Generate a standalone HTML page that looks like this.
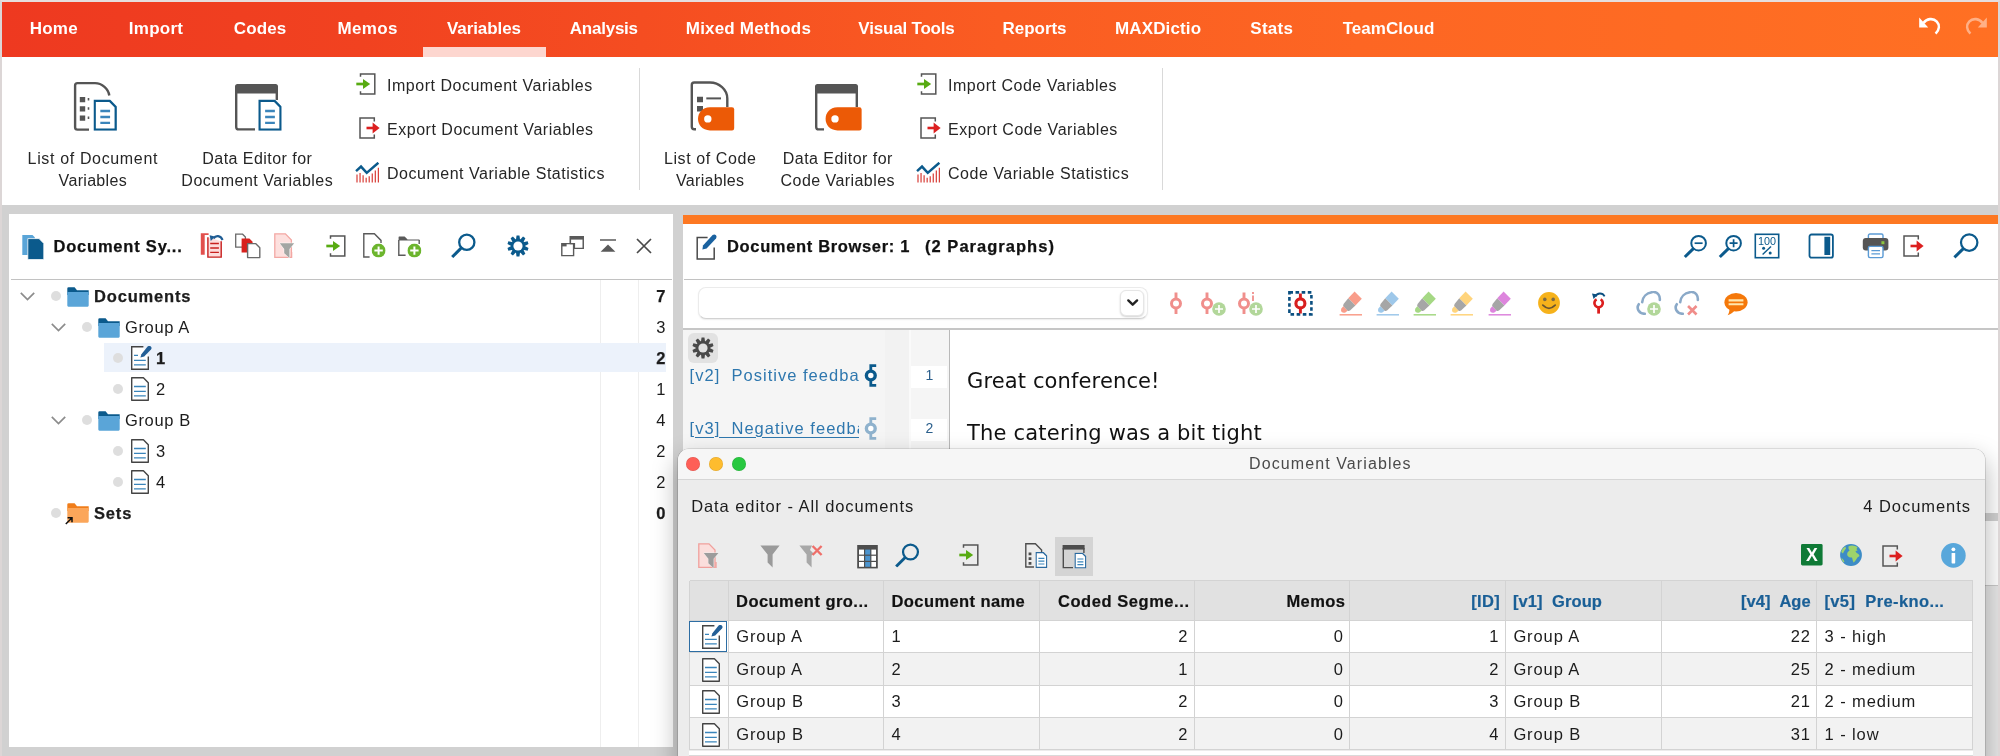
<!DOCTYPE html>
<html lang="en">
<head>
<meta charset="utf-8">
<title>Document Variables</title>
<style>
*{box-sizing:border-box;margin:0;padding:0}
html,body{width:2000px;height:756px;overflow:hidden}
body{position:relative;background:#d1d1d1;font-family:"Liberation Sans",sans-serif;color:#1a1a1a}
.a{position:absolute}
.t{position:absolute;white-space:pre;line-height:1}
svg{position:absolute;overflow:visible}
#root{position:absolute;left:0;top:0;width:2000px;height:756px;will-change:transform}
/* top ribbon */
#frame{left:0;top:0;width:2000px;height:756px;border:2px solid #dcd6d6;border-top-color:#e6dede;border-bottom:none;pointer-events:none;z-index:50}
#tabs{left:2px;top:2px;width:1996px;height:55px;background:linear-gradient(90deg,#ee3920 0%,#f14220 18%,#f54d21 32%,#fa5c22 50%,#fd6623 68%,#ff7023 100%)}
.tab{color:#fff;font-weight:bold;font-size:17px;top:20px}
#tabsel{left:423px;top:47px;width:123px;height:10px;background:#fdd6cf}
#ribbon{left:2px;top:57px;width:1996px;height:148px;background:#fff}
.rl{letter-spacing:.5px;font-size:16px;color:#262626;text-align:center;line-height:22px;white-space:nowrap;position:absolute}
.rs{font-size:16px;color:#262626;letter-spacing:.52px}
.vsep{width:1px;background:#d9d9d9;top:68px;height:122px}
/* left panel */
#lp{left:9px;top:214px;width:664px;height:533px;background:#fff}
.hb{-webkit-text-stroke:.25px #111;font-weight:bold;font-size:16.5px;color:#111}
.tr{font-size:16.5px;color:#1c1c1c}
.tr[style*="bold"],.num[style*="bold"]{-webkit-text-stroke:.25px}
.num{font-size:16.5px;color:#1c1c1c;text-align:right;width:40px}
.dot{width:10px;height:10px;border-radius:50%;background:#dedede}
.th{font-size:16.5px;font-weight:bold;-webkit-text-stroke:.2px}
.td{font-size:16.5px;color:#1c1c1c;letter-spacing:.9px}
/* right panel */
#rp{left:683px;top:214.6px;width:1315px;height:542px;background:#fff}
</style>
</head>
<body>
<div id="root">
<div class="a" id="tabs"></div>
<div class="a" id="tabsel"></div>
<div class="t tab" style="left:29.8px;letter-spacing:0.19px">Home</div>
<div class="t tab" style="left:128.8px;letter-spacing:0.27px">Import</div>
<div class="t tab" style="left:233.8px;letter-spacing:0.1px">Codes</div>
<div class="t tab" style="left:337.4px;letter-spacing:0.4px">Memos</div>
<div class="t tab" style="left:447px;letter-spacing:-0.08px">Variables</div>
<div class="t tab" style="left:569.8px;letter-spacing:-0.24px">Analysis</div>
<div class="t tab" style="left:685.8px;letter-spacing:0.19px">Mixed Methods</div>
<div class="t tab" style="left:858.3px;letter-spacing:-0.19px">Visual Tools</div>
<div class="t tab" style="left:1002.5px;letter-spacing:-0.03px">Reports</div>
<div class="t tab" style="left:1115px;letter-spacing:0.14px">MAXDictio</div>
<div class="t tab" style="left:1250.3px;letter-spacing:0.28px">Stats</div>
<div class="t tab" style="left:1342.7px;letter-spacing:0.04px">TeamCloud</div>
<svg style="left:1917px;top:15px" width="26" height="24" viewBox="0 0 26 24"><path d="M2.2 2.6 L2.2 12.4 L11.2 12.4 Z" fill="#fff"/><path d="M6.5 8 C9.5 3.6 16 2.6 19.8 6.6 C22.8 9.8 22.6 14.6 18.6 18.6" fill="none" stroke="#fff" stroke-width="2.6" stroke-linecap="butt"/></svg>
<svg style="left:1963px;top:15px" width="26" height="24" viewBox="0 0 26 24" opacity="0.45"><path d="M23.8 2.6 L23.8 12.4 L14.8 12.4 Z" fill="#fff"/><path d="M19.5 8 C16.5 3.6 10 2.6 6.2 6.6 C3.2 9.8 3.4 14.6 7.4 18.6" fill="none" stroke="#fff" stroke-width="2.6"/></svg>
<svg width="0" height="0" style="left:-10px;top:-10px"><defs>
<symbol id="bluedoc" viewBox="0 0 24 32"><path d="M1.2 1.2 H16.5 L22.8 7.5 V30.8 H1.2 Z" fill="#fff" stroke="#0b5a8c" stroke-width="2.4" stroke-linejoin="miter"/><path d="M7 11.7 H17 M7 17.8 H17 M7 23.9 H17" stroke="#3a85bb" stroke-width="2.4"/></symbol>
<symbol id="imp" viewBox="0 0 20 22"><path d="M4.5 3.8 V1 H18.8 V21 H4.5 V18.2" fill="none" stroke="#555" stroke-width="1.5"/><path d="M0.3 11 H9" stroke="#58ab12" stroke-width="2.7"/><path d="M7 6 L14.2 11 L7 16 Z" fill="#58ab12"/></symbol>
<symbol id="exp" viewBox="0 0 22 22"><path d="M15.3 4.6 V1 H1 V21 H15.3 V17.4" fill="none" stroke="#555" stroke-width="1.5"/><path d="M7.5 11 H16" stroke="#dc1f1f" stroke-width="2.6"/><path d="M13.6 5.4 L20.6 11 L13.6 16.6 Z" fill="#dc1f1f"/></symbol>
<symbol id="stat" viewBox="0 0 26 22"><path d="M1 9.5 L6.2 4.8 L12.2 11.4 L24.4 0.8" fill="none" stroke="#0b5a8c" stroke-width="2.6" stroke-linejoin="miter"/><path d="M2 13 V21.5 M5.2 11.5 V21.5 M8.4 14 V21.5 M11.6 16.5 V21.5 M14.8 15 V21.5 M18 12 V21.5 M21.2 9 V21.5 M24.4 6 V21.5" stroke="#d9423c" stroke-width="1.3"/></symbol>
</defs></svg>
<div class="a" id="ribbon"></div>
<svg style="left:73px;top:81px" width="45" height="50" viewBox="0 0 45 50"><path d="M16 48.6 H4.5 Q2.1 48.6 2.1 46.2 V4.5 Q2.1 2.1 4.5 2.1 H22 C29 2.1 35.5 8 36.3 14.5" fill="none" stroke="#555" stroke-width="2.4"/><path d="M6.8 16 h5.4 v5.2 h-5.4z M6.8 25.3 h5.4 v5.2 h-5.4z M6.8 34.6 h5.4 v5.2 h-5.4z" fill="#555"/><path d="M15.5 17 v2.4 M15.5 26.3 v2.4 M15.5 35.6 v2.4" stroke="#555" stroke-width="1.6"/><use href="#bluedoc" x="20.5" y="18.6" width="23.4" height="31.2"/></svg>
<svg style="left:234px;top:83px" width="49" height="48" viewBox="0 0 49 48"><path d="M1 10.5 V3.5 Q1 1 3.5 1 H41.5 Q44 1 44 3.5 V10.5 Z" fill="#555"/><path d="M21 46.4 H4.6 Q2.2 46.4 2.2 44 V8 M42.8 8 V17" fill="none" stroke="#555" stroke-width="2.4"/><use href="#bluedoc" x="24.3" y="16.6" width="23.4" height="31.2"/></svg>
<svg style="left:690px;top:80px" width="46" height="52" viewBox="0 0 46 52"><path d="M6 49.2 H4.2 Q1.8 49.2 1.8 46.8 V4.9 Q1.8 2.5 4.2 2.5 H20 C29 2.5 37.3 9.5 37.3 18.5 V27" fill="none" stroke="#555" stroke-width="2.4"/><path d="M7 16.7 h6 v5.5 h-6z M7 26 h6 v5.5 h-6z" fill="#555"/><path d="M16.3 18.4 H31" stroke="#555" stroke-width="2"/><path d="M20 27.2 H42 Q44.2 27.2 44.2 29.4 V48.2 Q44.2 50.4 42 50.4 H20 C12 50.4 8 44.5 8 38.8 C8 33 12 27.2 20 27.2 Z" fill="#ec5a06"/><circle cx="17.8" cy="38.9" r="3.7" fill="#fff"/></svg>
<svg style="left:814px;top:83px" width="50" height="49" viewBox="0 0 50 49"><path d="M1 10.5 V3.5 Q1 1 3.5 1 H41.5 Q44 1 44 3.5 V10.5 Z" fill="#555"/><path d="M10 46.4 H4.6 Q2.2 46.4 2.2 44 V8 M42.8 8 V24" fill="none" stroke="#555" stroke-width="2.4"/><path d="M23.5 24.2 H45.4 Q47.6 24.2 47.6 26.4 V45.2 Q47.6 47.4 45.4 47.4 H23.5 C15.5 47.4 11.6 41.5 11.6 35.8 C11.6 30 15.5 24.2 23.5 24.2 Z" fill="#ec5a06"/><circle cx="21" cy="35.9" r="3.7" fill="#fff"/></svg>
<div class="rl" style="left:-7.20px;top:148px;width:200px"><span style="letter-spacing:0.65px">List of Document</span><br><span style="letter-spacing:0.32px">Variables</span></div>
<div class="rl" style="left:157.3px;top:148px;width:200px"><span style="letter-spacing:0.46px">Data Editor for</span><br><span style="letter-spacing:0.5px">Document Variables</span></div>
<div class="rl" style="left:610.2px;top:148px;width:200px"><span style="letter-spacing:0.6px">List of Code</span><br><span style="letter-spacing:0.32px">Variables</span></div>
<div class="rl" style="left:737.8px;top:148px;width:200px"><span style="letter-spacing:0.46px">Data Editor for</span><br><span style="letter-spacing:0.44px">Code Variables</span></div>
<svg style="left:355.5px;top:73px" width="20" height="22"><use href="#imp" width="20" height="22"/></svg><div class="t rs" style="left:387px;top:78.2px">Import Document Variables</div>
<svg style="left:358.8px;top:117px" width="22" height="22"><use href="#exp" width="22" height="22"/></svg><div class="t rs" style="left:387px;top:122.2px">Export Document Variables</div>
<svg style="left:355px;top:162.4px" width="25" height="21"><use href="#stat" width="25" height="21"/></svg><div class="t rs" style="left:387px;top:166.2px">Document Variable Statistics</div>
<svg style="left:916.5px;top:73px" width="20" height="22"><use href="#imp" width="20" height="22"/></svg><div class="t rs" style="left:948px;top:78.2px">Import Code Variables</div>
<svg style="left:919.8px;top:117px" width="22" height="22"><use href="#exp" width="22" height="22"/></svg><div class="t rs" style="left:948px;top:122.2px">Export Code Variables</div>
<svg style="left:916px;top:162.4px" width="25" height="21"><use href="#stat" width="25" height="21"/></svg><div class="t rs" style="left:948px;top:166.2px">Code Variable Statistics</div>
<div class="a vsep" style="left:639px"></div><div class="a vsep" style="left:1162px"></div>
<svg width="0" height="0" style="left:-10px;top:-10px"><defs>
<symbol id="folder" viewBox="0 0 22 20"><path d="M0.3 1.6 Q0.3 0.3 1.6 0.3 H7.6 L10 3.2 H21.7 V8 H0.3 Z" fill="#0b5a8c"/><path d="M0.3 5 H21.7 V18.6 Q21.7 19.7 20.6 19.7 H1.4 Q0.3 19.7 0.3 18.6 Z" fill="#5aa5d8"/></symbol>
<symbol id="doc" viewBox="0 0 18 24"><path d="M0.7 0.7 H12.4 L17.3 5.8 V23.3 H0.7 Z" fill="#fff" stroke="#444" stroke-width="1.4" stroke-linejoin="round"/><path d="M3 9.5 H14.8 M3 14.3 H14.8 M3 18.9 H14.8" stroke="#3a85bb" stroke-width="1.3"/></symbol>
<symbol id="docedit" viewBox="0 0 21 24"><path d="M12.4 0.7 H0.7 V23.3 H17.3 V10.4" fill="#fff" stroke="#444" stroke-width="1.4"/><path d="M3 9.4 H7 M3 14.4 H14.8 M3 18.9 H14.8" stroke="#3a85bb" stroke-width="1.3"/><path d="M9.4 11.6 L10.4 8.2 L16.6 0.6 Q18 -0.8 19.8 0.4 Q21.2 1.8 20 3.4 L13.2 10.6 Z" fill="#235f96"/></symbol>
<symbol id="chev" viewBox="0 0 15 9"><path d="M0.8 0.9 L7.5 7.6 L14.2 0.9" fill="none" stroke="#8c8c8c" stroke-width="1.7"/></symbol>
<symbol id="plusc" viewBox="0 0 14 14"><circle cx="7" cy="7" r="7" fill="#6cb52d"/><path d="M7 2.8 V11.2 M2.8 7 H11.2" stroke="#fff" stroke-width="2"/></symbol>
<symbol id="mag" viewBox="0 0 25 25"><circle cx="15.8" cy="9.2" r="7.6" fill="none" stroke="#0b5a8c" stroke-width="2.3"/><path d="M10.6 14.6 L1.2 24" stroke="#0b5a8c" stroke-width="3" stroke-linecap="butt"/></symbol>
<symbol id="gear" viewBox="-11 -11 22 22"><g fill="currentColor"><circle r="7"/><g id="gt"><path d="M-2.1 -6 L-1.45 -10.6 H1.45 L2.1 -6 Z"/></g><use href="#gt" transform="rotate(36)"/><use href="#gt" transform="rotate(72)"/><use href="#gt" transform="rotate(108)"/><use href="#gt" transform="rotate(144)"/><use href="#gt" transform="rotate(180)"/><use href="#gt" transform="rotate(216)"/><use href="#gt" transform="rotate(252)"/><use href="#gt" transform="rotate(288)"/><use href="#gt" transform="rotate(324)"/></g><circle r="4.6" fill="var(--hole,#fff)"/></symbol>
</defs></svg>
<div class="a" id="lp"></div>
<svg style="left:22px;top:234px" width="23" height="26" viewBox="0 0 23 26"><path d="M0.3 1 H10.5 L13 3.5 V21 H0.3 Z" fill="#5aa5d8"/><path d="M5.8 4.6 H17 L21.8 9.4 V25 Q21.8 25.6 21.2 25.6 H6.4 Q5.8 25.6 5.8 25 Z" fill="#0b5a8c" stroke="#fff" stroke-width="0.8"/></svg>
<div class="t hb" style="left:53.5px;top:238.2px;letter-spacing:.79px">Document Sy...</div>
<svg style="left:200px;top:233px" width="24" height="26" viewBox="0 0 24 26"><path d="M0.8 0.2 H8.6 V2 H4.7 V21.8 H0.8 Z" fill="#e2504d"/><path d="M7.9 4.2 V24.1 H21.2 V8.2" fill="#fddcdc" stroke="#c8201e" stroke-width="1.4"/><path d="M10.2 10.5 H18.9 M10.2 15 H18.9 M10.2 19.4 H18.9" stroke="#c8201e" stroke-width="1.4"/><path d="M13.6 5.6 C15.6 2 20.6 2.2 22.6 7" fill="none" stroke="#1f5d94" stroke-width="2.1"/><path d="M9.6 2.2 L15 3.4 L10.8 8 Z" fill="#1f5d94"/></svg>
<svg style="left:235px;top:233px" width="26" height="26" viewBox="0 0 26 26"><path d="M0.7 1.2 H7.6 L10.4 4 V14.2 H0.7 Z" fill="#fff" stroke="#6a6a6a" stroke-width="1.3"/><path d="M6.6 5.6 H14.4 L17.6 8.8 V19.6 H6.6 Z" fill="#d8211d"/><path d="M12.6 10.6 H20.6 L24.8 14.8 V24.6 H12.6 Z" fill="#fff" stroke="#6a6a6a" stroke-width="1.4" stroke-linejoin="round"/></svg>
<svg style="left:274px;top:233px" width="22" height="26" viewBox="0 0 22 26"><path d="M0.8 0.8 H11.4 L17.4 7 V24.3 H0.8 Z" fill="#fde0de" stroke="#f3a8a4" stroke-width="1.3"/><path d="M5.8 10.2 H20.2 L15.5 16 V24.9 L10.2 20.2 V16 Z" fill="#a3a6a3" stroke="#fff" stroke-width="0.9" paint-order="stroke"/><path d="M17.6 18.9 V24.9" stroke="#f3a8a4" stroke-width="1.3"/></svg>
<svg style="left:326px;top:235px" width="20" height="22"><use href="#imp" width="20" height="22"/></svg>
<svg style="left:363px;top:233px" width="23" height="25" viewBox="0 0 23 25"><path d="M6.6 24 H0.8 V0.8 H11.4 L18 7.4 V10" fill="none" stroke="#5a5a5a" stroke-width="1.4"/><use href="#plusc" x="8.6" y="10.6" width="14" height="14"/></svg>
<svg style="left:398px;top:236px" width="24" height="22" viewBox="0 0 24 22"><path d="M0.6 4 V1 Q0.6 0.4 1.2 0.4 H6.6 L9.6 3.6 H21.4 V4.6 H0.6 Z" fill="#5a5a5a"/><path d="M7.6 19.2 H0.8 V4 M21.2 4 V8" fill="none" stroke="#5a5a5a" stroke-width="1.4"/><use href="#plusc" x="9.4" y="7.6" width="14" height="14"/></svg>
<svg style="left:451px;top:233px" width="25" height="25"><use href="#mag" width="25" height="25"/></svg>
<svg style="left:506.9px;top:234.8px;color:#0b5a8c" width="22" height="22"><use href="#gear" width="22" height="22"/></svg>
<svg style="left:561px;top:236px" width="23" height="21" viewBox="0 0 23 21"><path d="M9.4 0.6 H22.2 V12.4 H9.4 Z" fill="#fff" stroke="#5a5a5a" stroke-width="1.4"/><path d="M9.4 0.6 H22.2 V3.8 H9.4 Z" fill="#5a5a5a"/><path d="M0.8 7.6 H12.6 V19.6 H0.8 Z" fill="#fff" stroke="#5a5a5a" stroke-width="1.4"/><path d="M0.8 7.6 H5.6 V10.4 H0.8 Z" fill="#5a5a5a"/><path d="M9.4 0.6 H22.2 V12.4 H13.4 V7.6 H9.4 Z" fill="#fff" stroke="#5a5a5a" stroke-width="1.4"/><path d="M9.4 0.6 H22.2 V3.6 H9.4 Z" fill="#5a5a5a"/></svg>
<svg style="left:600px;top:239px" width="16" height="14" viewBox="0 0 16 14"><path d="M0 1 H16" stroke="#5a5a5a" stroke-width="1.5"/><path d="M8 5.4 L15.4 12.8 H0.6 Z" fill="#5a5a5a"/></svg>
<svg style="left:636px;top:238px" width="16" height="16" viewBox="0 0 16 16"><path d="M1 1 L15 15 M15 1 L1 15" stroke="#4a4a4a" stroke-width="1.7"/></svg>
<div class="a" style="left:11px;top:278.5px;width:661px;height:1.4px;background:#c2c2c2"></div>
<div class="a" style="left:600px;top:280px;width:1px;height:467px;background:#eeeeee"></div>
<div class="a" style="left:638px;top:280px;width:1px;height:467px;background:#eeeeee"></div>
<div class="a" style="left:104px;top:343px;width:562px;height:29px;background:#ecf2fb"></div>
<svg style="left:20px;top:291.8px" width="15" height="9"><use href="#chev" width="15" height="9"/></svg><div class="a dot" style="left:51px;top:290.6px"></div><svg style="left:66.8px;top:287.0px" width="22" height="20"><use href="#folder" width="22" height="20"/></svg><div class="t tr" style="left:94px;top:288.0px;font-weight:bold;letter-spacing:.83px">Documents</div><div class="t num" style="left:625.4px;top:288.0px;font-weight:bold;">7</div>
<svg style="left:51px;top:322.8px" width="15" height="9"><use href="#chev" width="15" height="9"/></svg><div class="a dot" style="left:82px;top:321.6px"></div><svg style="left:98px;top:318.0px" width="22" height="20"><use href="#folder" width="22" height="20"/></svg><div class="t tr" style="left:125px;top:319.0px;letter-spacing:.64px">Group A</div><div class="t num" style="left:625.4px;top:319.0px;">3</div>
<div class="a dot" style="left:113px;top:352.6px"></div><svg style="left:131px;top:345.9px" width="21" height="24"><use href="#docedit" width="21" height="24"/></svg><div class="t tr" style="left:156px;top:350.0px;font-weight:bold;letter-spacing:0px">1</div><div class="t num" style="left:625.4px;top:350.0px;font-weight:bold;">2</div>
<div class="a dot" style="left:113px;top:383.6px"></div><svg style="left:131px;top:376.9px" width="18" height="24"><use href="#doc" width="18" height="24"/></svg><div class="t tr" style="left:156px;top:381.0px;letter-spacing:0px">2</div><div class="t num" style="left:625.4px;top:381.0px;">1</div>
<svg style="left:51px;top:415.8px" width="15" height="9"><use href="#chev" width="15" height="9"/></svg><div class="a dot" style="left:82px;top:414.6px"></div><svg style="left:98px;top:411.0px" width="22" height="20"><use href="#folder" width="22" height="20"/></svg><div class="t tr" style="left:125px;top:412.0px;letter-spacing:.64px">Group B</div><div class="t num" style="left:625.4px;top:412.0px;">4</div>
<div class="a dot" style="left:113px;top:445.6px"></div><svg style="left:131px;top:438.9px" width="18" height="24"><use href="#doc" width="18" height="24"/></svg><div class="t tr" style="left:156px;top:443.0px;letter-spacing:0px">3</div><div class="t num" style="left:625.4px;top:443.0px;">2</div>
<div class="a dot" style="left:113px;top:476.6px"></div><svg style="left:131px;top:469.9px" width="18" height="24"><use href="#doc" width="18" height="24"/></svg><div class="t tr" style="left:156px;top:474.0px;letter-spacing:0px">4</div><div class="t num" style="left:625.4px;top:474.0px;">2</div>
<div class="a dot" style="left:51px;top:507.6px"></div><svg style="left:64.8px;top:503.20px" width="24" height="22" viewBox="0 0 24 22"><path d="M2.3 1.6 Q2.3 0.3 3.6 0.3 H9.6 L12 3.2 H23.7 V8 H2.3 Z" fill="#f07d1a"/><path d="M2.3 5 H23.7 V18.6 Q23.7 19.7 22.6 19.7 H3.4 Q2.3 19.7 2.3 18.6 Z" fill="#fba65a"/><path d="M0.8 21 L6.6 15.2 M2.6 14.8 H7 V19.2" fill="none" stroke="#111" stroke-width="1.5"/></svg><div class="t tr" style="left:94px;top:505.0px;font-weight:bold;letter-spacing:.83px">Sets</div><div class="t num" style="left:625.4px;top:505.0px;font-weight:bold;">0</div>
<svg width="0" height="0" style="left:-10px;top:-10px"><defs>
<symbol id="code" viewBox="0 0 14 24"><circle cx="7" cy="11.4" r="4.5" fill="none" stroke="currentColor" stroke-width="3"/><path d="M7 0.6 V6 M7 16.8 V22" stroke="currentColor" stroke-width="2.9"/></symbol>
<symbol id="plusp" viewBox="0 0 14 14"><circle cx="7" cy="7" r="6.8" fill="#b2d79a"/><path d="M7 3 V11 M3 7 H11" stroke="#fff" stroke-width="1.7"/></symbol>
<symbol id="hl" viewBox="0 0 24 25"><path d="M15.6 0.6 L22.8 7.8 L16.4 14.4 L9.2 7.2 Z" fill="currentColor"/><path d="M9.2 7.2 L16.4 14.4 L11 19.6 Q9.6 20.6 8.2 19.4 L4.6 15.8 Q3.6 14.4 4.6 13 Z" fill="#a6a6a6"/><path d="M4.2 15.2 L8.6 19.8 L6.4 21.4 Q4.4 22.4 2.6 21 Q1.4 19.4 2.4 17.6 Z" fill="currentColor"/><path d="M0.6 23.8 H23" stroke="currentColor" stroke-width="1.5"/></symbol>
<symbol id="csym" viewBox="0 0 14 23"><path d="M6.8 7 V1.6 H12.2 M6.8 16 V21.4 H12.2" fill="none" stroke="currentColor" stroke-width="2.8"/><circle cx="6.8" cy="11.5" r="4.4" fill="#fff" stroke="currentColor" stroke-width="3.4"/></symbol>
<symbol id="cloud" viewBox="0 0 26 24"><path d="M8.8 22.8 C2.4 22.6 0.2 17 2.8 13.2 M6.2 11.2 C6.6 6 10.6 2.2 15.8 1.3 M17.8 0.9 C21.8 1.4 24.2 4.8 23.8 9" fill="none" stroke="#8aa9c8" stroke-width="2.6" stroke-linecap="round"/></symbol>
</defs></svg>
<div class="a" id="rp"></div>
<div class="a" style="left:683px;top:214.6px;width:1315px;height:9.2px;background:#fd7822"></div>
<svg style="left:696px;top:234px" width="22" height="26" viewBox="0 0 22 26"><path d="M11.6 3.6 H1.2 V25 H18.2 V13.4" fill="none" stroke="#4a4a4a" stroke-width="1.5"/><path d="M7 11.4 L16.6 1 Q18.4 -0.2 20 1.2 Q21.2 2.8 20 4.4 L10.6 14.6 L6.4 15.4 Z" fill="#1a62a0"/></svg>
<div class="t hb" style="left:727px;top:238.4px;letter-spacing:.655px">Document Browser: 1</div>
<div class="t hb" style="left:925px;top:238.4px;letter-spacing:1.03px">(2 Paragraphs)</div>
<svg style="left:1684px;top:234px" width="24" height="24" viewBox="0 0 24 24"><circle cx="14.6" cy="9.2" r="7.3" fill="none" stroke="#0b5a8c" stroke-width="2"/><path d="M9.6 14.4 L0.8 23" stroke="#0b5a8c" stroke-width="3"/><path d="M10.6 9.2 H18.6" stroke="#0b5a8c" stroke-width="1.7"/></svg>
<svg style="left:1719px;top:234px" width="24" height="24" viewBox="0 0 24 24"><circle cx="14.6" cy="9.2" r="7.3" fill="none" stroke="#0b5a8c" stroke-width="2"/><path d="M9.6 14.4 L0.8 23" stroke="#0b5a8c" stroke-width="3"/><path d="M10.6 9.2 H18.6 M14.6 5.2 V13.2" stroke="#0b5a8c" stroke-width="1.7"/></svg>
<svg style="left:1754px;top:233px" width="26" height="26" viewBox="0 0 26 26"><rect x="1.3" y="1.3" width="23.4" height="23.4" fill="#fff" stroke="#0b5a8c" stroke-width="1.6"/><text x="13" y="11.6" font-family="Liberation Sans, sans-serif" font-size="10" text-anchor="middle" fill="#0b5a8c" textLength="18" lengthAdjust="spacingAndGlyphs">100</text><path d="M8.6 21.4 L17 13.4" stroke="#0b5a8c" stroke-width="1.4"/><circle cx="9.6" cy="15.2" r="1.5" fill="#0b5a8c"/><circle cx="16.2" cy="20" r="1.5" fill="#0b5a8c"/></svg>
<svg style="left:1808px;top:233px" width="26" height="26" viewBox="0 0 26 26"><rect x="1.5" y="1.5" width="23.4" height="23.2" rx="2" fill="#fff" stroke="#0b5a8c" stroke-width="1.8"/><rect x="16.4" y="3.8" width="5.8" height="18.2" fill="#0b5a8c"/></svg>
<svg style="left:1862px;top:233px" width="28" height="26" viewBox="0 0 28 26"><rect x="6.4" y="1" width="14.6" height="8" rx="1.5" fill="#fff" stroke="#5b9bd5" stroke-width="1.4"/><rect x="0.8" y="5" width="25.6" height="12.4" rx="3" fill="#555"/><rect x="6.4" y="13.4" width="14.6" height="11.2" rx="1.5" fill="#fff" stroke="#5b9bd5" stroke-width="1.4"/><path d="M9.4 17.6 H18 M9.4 20.8 H18" stroke="#5b9bd5" stroke-width="1.3"/><rect x="19.4" y="8.2" width="3" height="3" fill="#8cc63f"/></svg>
<svg style="left:1903px;top:234.6px" width="21.5" height="21.5"><use href="#exp" width="22" height="22"/></svg>
<svg style="left:1953px;top:233px" width="26" height="25" viewBox="0 0 26 25"><circle cx="16.2" cy="9.6" r="8.2" fill="none" stroke="#0b5a8c" stroke-width="2.2"/><path d="M10.6 15.4 L1.4 24.4" stroke="#0b5a8c" stroke-width="3"/></svg>
<div class="a" style="left:684px;top:278.5px;width:1314px;height:1.4px;background:#c2c2c2"></div>
<div class="a" style="left:698px;top:286.5px;width:450px;height:32px;border:1px solid #ebebeb;border-bottom-color:#d2d2d2;border-radius:8px;background:#fff;box-shadow:0 1px 1.5px rgba(0,0,0,.08)"></div>
<div class="a" style="left:1120px;top:289.5px;width:24px;height:26px;border:1px solid #e6e6e6;border-radius:6px;background:#fff;box-shadow:0 1px 2px rgba(0,0,0,.18)"></div>
<svg style="left:1126.6px;top:299px" width="11.4" height="7.4" viewBox="0 0 11.4 7.4"><path d="M1.3 1.4 L5.7 5.7 L10.1 1.4" fill="none" stroke="#222" stroke-width="2.4" stroke-linecap="round" stroke-linejoin="round"/></svg>
<svg style="left:1169px;top:292px;color:#f08f8c" width="14" height="24"><use href="#code" width="14" height="24"/></svg>
<svg style="left:1200px;top:292px;color:#f08f8c" width="14" height="24"><use href="#code" width="14" height="24"/></svg>
<svg style="left:1211.6px;top:301.8px" width="14" height="14"><use href="#plusp" width="14" height="14"/></svg>
<svg style="left:1237px;top:292px;color:#f08f8c" width="14" height="24"><use href="#code" width="14" height="24"/></svg>
<svg style="left:1250.6px;top:291.6px" width="4" height="9" viewBox="0 0 4 9"><path d="M2 0 V2 M2 3.4 V9" stroke="#f08f8c" stroke-width="1.8"/></svg>
<svg style="left:1249.2px;top:301.8px" width="14" height="14"><use href="#plusp" width="14" height="14"/></svg>
<svg style="left:1288px;top:291px" width="25" height="25" viewBox="0 0 25 25"><rect x="1.4" y="1.4" width="22" height="22" fill="none" stroke="#0b4f80" stroke-width="2.6" stroke-dasharray="3.6 2.53"/><circle cx="12.4" cy="12.4" r="4.5" fill="none" stroke="#d81f1f" stroke-width="3.1"/><path d="M12.4 2.6 V7 M12.4 17.8 V22.4" stroke="#d81f1f" stroke-width="2.9"/></svg>
<svg style="left:1339px;top:291px;color:#f99d8a" width="24" height="25"><use href="#hl" width="24" height="25"/></svg>
<svg style="left:1376px;top:291px;color:#9ec8ea" width="24" height="25"><use href="#hl" width="24" height="25"/></svg>
<svg style="left:1413px;top:291px;color:#a5d884" width="24" height="25"><use href="#hl" width="24" height="25"/></svg>
<svg style="left:1450px;top:291px;color:#ffd47c" width="24" height="25"><use href="#hl" width="24" height="25"/></svg>
<svg style="left:1488px;top:291px;color:#dd85dd" width="24" height="25"><use href="#hl" width="24" height="25"/></svg>
<svg style="left:1537.8px;top:292.2px" width="22" height="22" viewBox="0 0 22 22"><circle cx="11" cy="11" r="10.9" fill="#f6b21b"/><circle cx="6.8" cy="7.4" r="1.8" fill="#7d6a45"/><circle cx="15.2" cy="7.4" r="1.8" fill="#7d6a45"/><path d="M4.8 13.2 Q11 19.4 17.2 13.2" fill="none" stroke="#6a5530" stroke-width="1.7" stroke-linecap="round"/></svg>
<svg style="left:1590px;top:291px" width="18" height="25" viewBox="0 0 18 25"><path d="M6.6 8.4 A4.2 4.2 0 1 0 10.6 8.4" fill="none" stroke="#dc1f1f" stroke-width="2.7"/><path d="M8.6 16 V22.6" stroke="#dc1f1f" stroke-width="2.8"/><path d="M5.4 5.6 C7 1.6 12.6 1.4 14.6 5.4" fill="none" stroke="#0b4f80" stroke-width="1.8"/><path d="M2 2.6 L7.6 3.4 L3.6 8 Z" fill="#0b4f80"/></svg>
<svg style="left:1636px;top:291px" width="26" height="24"><use href="#cloud" width="26" height="24"/></svg>
<svg style="left:1646.8px;top:301.6px" width="14" height="14"><use href="#plusp" width="14" height="14"/></svg>
<svg style="left:1674px;top:291px" width="26" height="24"><use href="#cloud" width="26" height="24"/></svg>
<svg style="left:1687px;top:304.6px" width="10.6" height="10.6" viewBox="0 0 10 10"><path d="M1 1 L9 9 M9 1 L1 9" stroke="#f08d8a" stroke-width="2.5"/></svg>
<svg style="left:1723.6px;top:292.6px" width="24" height="23" viewBox="0 0 24 23"><ellipse cx="12" cy="9.3" rx="11.6" ry="9.2" fill="#f5780a"/><path d="M5.4 15 C5.6 18 5 20.4 3.6 22.2 C7 21 9.6 19 11 17 Z" fill="#f5780a"/><path d="M4.6 7.4 H19.4 M4.6 11.2 H19.4" stroke="#ffe7ae" stroke-width="2.1"/></svg>
<div class="a" style="left:683px;top:328.3px;width:1315px;height:1.5px;background:#c6c6c6"></div>
<div class="a" style="left:683px;top:330px;width:266px;height:130px;background:#f5f5f5"></div>
<div class="a" style="left:885px;top:330px;width:24px;height:130px;background:#f2f2f2"></div>
<div class="a" style="left:909px;top:330px;width:2px;height:130px;background:#fafafa"></div>
<div class="a" style="left:948.6px;top:330px;width:1.6px;height:130px;background:#b9b9b9"></div>
<div class="a" style="left:688px;top:333px;width:30px;height:30px;border-radius:6px;background:#e2e2e2"></div>
<svg style="left:691.7px;top:337.2px;color:#4a4a4a;--hole:#e2e2e2" width="22" height="22"><use href="#gear" width="22" height="22"/></svg>
<div class="t" style="left:689.6px;top:366.6px;font-size:16.5px;color:#2e77ae;letter-spacing:1.02px">[v2]  Positive feedba</div>
<svg style="left:864px;top:364.2px;color:#0b5a8c" width="14" height="23"><use href="#csym" width="14" height="23"/></svg>
<div class="t" style="left:689.6px;top:419.6px;font-size:16.5px;color:#2e77ae;letter-spacing:1.02px;text-decoration:underline;text-underline-offset:2.5px;text-decoration-thickness:1.3px;width:169.5px;overflow:hidden;height:21px">[v3]  Negative feedba</div>
<svg style="left:864px;top:417.2px;color:#8fb2cd" width="14" height="23"><use href="#csym" width="14" height="23"/></svg>
<div class="a" style="left:911.4px;top:366px;width:36px;height:22px;background:#fff"></div>
<div class="a" style="left:911.4px;top:418.5px;width:36px;height:22px;background:#fff"></div>
<div class="t" style="left:911.4px;width:36px;text-align:center;top:368.2px;font-size:14px;color:#2b5f8c">1</div>
<div class="t" style="left:911.4px;width:36px;text-align:center;top:420.7px;font-size:14px;color:#2b5f8c">2</div>
<div class="t" style="left:967px;top:370.6px;font-family:'DejaVu Sans',sans-serif;font-size:21px;letter-spacing:.13px;color:#111">Great conference!</div>
<div class="t" style="left:967px;top:423.2px;font-family:'DejaVu Sans',sans-serif;font-size:21px;letter-spacing:.2px;color:#111">The catering was a bit tight</div>
<div class="a" style="left:1985px;top:512.5px;width:13px;height:8px;background:#d0d0d0"></div>
<div class="a" style="left:1985px;top:584.5px;width:13px;height:172px;background:#e6e6e6;border-top:1px solid #c8c8c8"></div>
<div class="a" id="dlg" style="left:678px;top:449px;width:1307px;height:320px;border-radius:11px;background:#ececec;box-shadow:0 0 0 0.6px rgba(0,0,0,.2),0 11px 24px 2px rgba(0,0,0,.27)"></div>
<div class="a" style="left:678px;top:449px;width:1307px;height:30.5px;border-radius:11px 11px 0 0;background:#f6f6f6;border-bottom:1px solid #d6d6d6"></div>
<div class="a" style="left:686px;top:457.2px;width:14px;height:14px;border-radius:50%;background:#fe5f57;box-shadow:inset 0 0 0 .5px rgba(0,0,0,.12)"></div>
<div class="a" style="left:709.3px;top:457.2px;width:14px;height:14px;border-radius:50%;background:#febc2e;box-shadow:inset 0 0 0 .5px rgba(0,0,0,.12)"></div>
<div class="a" style="left:732.4px;top:457.2px;width:14px;height:14px;border-radius:50%;background:#28c840;box-shadow:inset 0 0 0 .5px rgba(0,0,0,.12)"></div>
<div class="t" style="left:1249px;top:456px;font-size:16px;color:#4a4a4a;letter-spacing:1.1px">Document Variables</div>
<div class="t" style="left:691.2px;top:498.4px;font-size:16.5px;color:#1c1c1c;letter-spacing:.92px">Data editor - All documents</div>
<div class="t" style="left:1863.3px;top:498.4px;font-size:16.5px;color:#1c1c1c;letter-spacing:.95px">4 Documents</div>
<svg width="0" height="0" style="left:-10px;top:-10px"><defs>
<symbol id="funnel" viewBox="0 0 20 23"><path d="M0.4 0.6 H19.6 L12.6 9.6 V22.6 L7.6 17.4 V9.6 Z" fill="#9a9a9a"/></symbol>
<symbol id="sdoc" viewBox="0 0 12 16"><path d="M0.7 0.7 H8 L11.3 4 V15.3 H0.7 Z" fill="#fff" stroke="#2a6aa0" stroke-width="1.3"/><path d="M3 6.4 H9 M3 9.2 H9 M3 12 H9" stroke="#3a85bb" stroke-width="1.2"/></symbol>
</defs></svg>
<svg style="left:698px;top:543px" width="22" height="26" viewBox="0 0 22 26"><path d="M0.8 0.8 H11 L17 7 V24.3 H0.8 Z" fill="#fbdedc" stroke="#f0a09c" stroke-width="1.3"/><path d="M5.8 10 H20.4 L15.6 15.8 V24.9 L10.4 20.2 V15.8 Z" fill="#9c9c9c" stroke="#ececec" stroke-width="0.9" paint-order="stroke"/><path d="M18 18.9 V24.9" stroke="#f0a09c" stroke-width="1.3"/></svg>
<svg style="left:760px;top:544.5px" width="20" height="23"><use href="#funnel" width="20" height="23"/></svg>
<svg style="left:799px;top:544.5px" width="24" height="23" viewBox="0 0 24 23"><path d="M0.4 0.6 H13 L11 5 L14.6 8.4 L12.6 10.6 V22.6 L7.6 17.4 V9.6 Z" fill="#a8a8a8"/><path d="M13.6 1 L22.6 10 M22.6 1 L13.6 10" stroke="#ef6f6a" stroke-width="2.4"/></svg>
<svg style="left:856.5px;top:544.5px" width="21" height="24" viewBox="0 0 21 24"><rect x="0.2" y="0" width="20.6" height="23.4" fill="#4d4d4d"/><rect x="2" y="4.6" width="5" height="5" fill="#fff"/><rect x="8.2" y="4.6" width="5" height="5" fill="#4b94cf"/><rect x="14.4" y="4.6" width="4.6" height="5" fill="#fff"/><rect x="2" y="10.8" width="5" height="5" fill="#fff"/><rect x="8.2" y="10.8" width="5" height="5" fill="#4b94cf"/><rect x="14.4" y="10.8" width="4.6" height="5" fill="#fff"/><rect x="2" y="17" width="5" height="4.8" fill="#fff"/><rect x="8.2" y="17" width="5" height="4.8" fill="#4b94cf"/><rect x="14.4" y="17" width="4.6" height="4.8" fill="#fff"/></svg>
<svg style="left:895px;top:543px" width="24.5" height="24.5"><use href="#mag" width="24.5" height="24.5"/></svg>
<svg style="left:959px;top:544px" width="20" height="22"><use href="#imp" width="20" height="22"/></svg>
<svg style="left:1024.5px;top:543px" width="23" height="25" viewBox="0 0 23 25"><path d="M9 24 H0.8 V0.8 H10.4 L16.6 7 V10" fill="none" stroke="#4d4d4d" stroke-width="1.4"/><path d="M3.6 9.4 h2.8 v2.8 h-2.8z M3.6 14.2 h2.8 v2.8 h-2.8z M3.6 19 h2.8 v2.8 h-2.8z" fill="#4d4d4d"/><use href="#sdoc" x="10.4" y="9" width="12" height="16"/></svg>
<div class="a" style="left:1054.5px;top:537px;width:38.5px;height:38.5px;background:#d4d4d4"></div>
<svg style="left:1061.5px;top:544.5px" width="25" height="24" viewBox="0 0 25 24"><rect x="0.6" y="0" width="22" height="4.6" fill="#4d4d4d"/><path d="M11 22.6 H1.3 V3 M21.9 3 V8" fill="none" stroke="#4d4d4d" stroke-width="1.4"/><use href="#sdoc" x="12.4" y="7.6" width="12" height="16"/></svg>
<svg style="left:1800.8px;top:544.3px" width="21.6" height="21.6" viewBox="0 0 22 22"><rect width="22" height="22" rx="1.5" fill="#0f7a36"/><text x="11" y="17.4" text-anchor="middle" font-family="Liberation Sans, sans-serif" font-weight="bold" font-size="18" fill="#fff">X</text></svg>
<svg style="left:1839.8px;top:544.1px" width="22" height="22" viewBox="0 0 22 22"><circle cx="11" cy="11" r="10.9" fill="#3d8cc6"/><path d="M8.4 2.4 C11 0.8 15 1.2 17.6 3.4 L16.4 5 L17.6 6.6 L15.4 7 L16.6 9 C18 9.4 19 10.6 19.6 12 L17.4 13.4 C16.4 15.4 14.6 17.6 13.6 18.4 C12.6 17.4 12.6 15 12 13.6 C10.4 13.6 8.2 13 7.4 11.4 C6.6 9.6 7.8 7.6 9.6 6.6 L8.6 5 Z" fill="#9ed36a"/><path d="M1.2 8 C2 5.4 3.6 3.6 5.4 2.6 L6 4.6 C4.6 6 3.6 8 3 9.6 Z M1.4 14 C2.4 14.4 3.6 15.6 4.4 17.4 L3.6 18.4 C2.4 17.2 1.6 15.6 1.4 14 Z" fill="#9ed36a"/></svg>
<svg style="left:1881.5px;top:544.5px" width="22" height="22"><use href="#exp" width="22" height="22"/></svg>
<svg style="left:1941px;top:543px" width="25" height="25" viewBox="0 0 25 25"><circle cx="12.4" cy="12.4" r="12.3" fill="#58a7db"/><circle cx="12.4" cy="6.3" r="1.9" fill="#fff"/><rect x="10.6" y="10" width="3.6" height="10.4" rx="0.6" fill="#fff"/></svg>
<div class="a" style="left:689.6px;top:581px;width:1283.19px;height:169px;background:#fff"></div>
<div class="a" style="left:689.6px;top:581px;width:1283.19px;height:39.5px;background:#e1e1e1"></div>
<div class="a" style="left:689.6px;top:652.8px;width:1283.19px;height:32.40px;background:#f2f2f2"></div>
<div class="a" style="left:689.6px;top:717.6px;width:1283.19px;height:32.39px;background:#f2f2f2"></div>
<div class="a" style="left:689.6px;top:580.4px;width:1283.19px;height:1px;background:#d3d3d3"></div><div class="a" style="left:689.6px;top:619.9px;width:1283.19px;height:1px;background:#d3d3d3"></div><div class="a" style="left:689.6px;top:652.19px;width:1283.19px;height:1px;background:#d3d3d3"></div><div class="a" style="left:689.6px;top:684.6px;width:1283.19px;height:1px;background:#d3d3d3"></div><div class="a" style="left:689.6px;top:717.0px;width:1283.19px;height:1px;background:#d3d3d3"></div><div class="a" style="left:689.6px;top:749.4px;width:1283.19px;height:1px;background:#d3d3d3"></div><div class="a" style="left:689.0px;top:581px;width:1px;height:169px;background:#d3d3d3"></div><div class="a" style="left:727.8px;top:581px;width:1px;height:169px;background:#d3d3d3"></div><div class="a" style="left:882.8px;top:581px;width:1px;height:169px;background:#d3d3d3"></div><div class="a" style="left:1038.80px;top:581px;width:1px;height:169px;background:#d3d3d3"></div><div class="a" style="left:1194.4px;top:581px;width:1px;height:169px;background:#d3d3d3"></div><div class="a" style="left:1349.4px;top:581px;width:1px;height:169px;background:#d3d3d3"></div><div class="a" style="left:1505.0px;top:581px;width:1px;height:169px;background:#d3d3d3"></div><div class="a" style="left:1660.9px;top:581px;width:1px;height:169px;background:#d3d3d3"></div><div class="a" style="left:1816.4px;top:581px;width:1px;height:169px;background:#d3d3d3"></div><div class="a" style="left:1972.2px;top:581px;width:1px;height:169px;background:#d3d3d3"></div>
<div class="a" style="left:689.2px;top:620.5px;width:37.4px;height:31.29px;border:1.4px solid #2d6da3;background:#fff"></div>
<div class="t th" style="left:736px;top:593.2px;letter-spacing:0.46px;color:#111">Document gro...</div><div class="t th" style="left:891.5px;top:593.2px;letter-spacing:0.41px;color:#111">Document name</div><div class="t th" style="right:811px;top:593.2px;letter-spacing:0.56px;color:#111;margin-right:-0.56px">Coded Segme...</div><div class="t th" style="right:655.09px;top:593.2px;letter-spacing:0.4px;color:#111;margin-right:-0.4px">Memos</div><div class="t th" style="right:500.29px;top:593.2px;letter-spacing:0.3px;color:#1a5f96;margin-right:-0.3px">[ID]</div><div class="t th" style="left:1513px;top:593.2px;letter-spacing:0.09px;color:#1a5f96">[v1]  Group</div><div class="t th" style="right:189.29px;top:593.2px;letter-spacing:0.08px;color:#1a5f96;margin-right:-0.08px">[v4]  Age</div><div class="t th" style="left:1824.4px;top:593.2px;letter-spacing:0.39px;color:#1a5f96">[v5]  Pre-kno...</div>
<svg style="left:701.8px;top:625.4px" width="21" height="24"><use href="#docedit" width="21" height="24"/></svg><div class="t td" style="left:736.2px;top:628.03px">Group A</div><div class="t td" style="left:891.5px;top:628.03px">1</div><div class="t td" style="right:812.5px;top:628.03px;margin-right:-.9px">2</div><div class="t td" style="right:657px;top:628.03px;margin-right:-.9px">0</div><div class="t td" style="right:501.5px;top:628.03px;margin-right:-.9px">1</div><div class="t td" style="left:1513.4px;top:628.03px">Group A</div><div class="t td" style="right:190px;top:628.03px;margin-right:-.9px">22</div><div class="t td" style="left:1824.6px;top:628.03px">3 - high</div>
<svg style="left:701.8px;top:657.7px" width="18" height="24"><use href="#doc" width="18" height="24"/></svg><div class="t td" style="left:736.2px;top:660.82px">Group A</div><div class="t td" style="left:891.5px;top:660.82px">2</div><div class="t td" style="right:812.5px;top:660.82px;margin-right:-.9px">1</div><div class="t td" style="right:657px;top:660.82px;margin-right:-.9px">0</div><div class="t td" style="right:501.5px;top:660.82px;margin-right:-.9px">2</div><div class="t td" style="left:1513.4px;top:660.82px">Group A</div><div class="t td" style="right:190px;top:660.82px;margin-right:-.9px">25</div><div class="t td" style="left:1824.6px;top:660.82px">2 - medium</div>
<svg style="left:701.8px;top:690.1px" width="18" height="24"><use href="#doc" width="18" height="24"/></svg><div class="t td" style="left:736.2px;top:693.43px">Group B</div><div class="t td" style="left:891.5px;top:693.43px">3</div><div class="t td" style="right:812.5px;top:693.43px;margin-right:-.9px">2</div><div class="t td" style="right:657px;top:693.43px;margin-right:-.9px">0</div><div class="t td" style="right:501.5px;top:693.43px;margin-right:-.9px">3</div><div class="t td" style="left:1513.4px;top:693.43px">Group B</div><div class="t td" style="right:190px;top:693.43px;margin-right:-.9px">21</div><div class="t td" style="left:1824.6px;top:693.43px">2 - medium</div>
<svg style="left:701.8px;top:722.5px" width="18" height="24"><use href="#doc" width="18" height="24"/></svg><div class="t td" style="left:736.2px;top:726.03px">Group B</div><div class="t td" style="left:891.5px;top:726.03px">4</div><div class="t td" style="right:812.5px;top:726.03px;margin-right:-.9px">2</div><div class="t td" style="right:657px;top:726.03px;margin-right:-.9px">0</div><div class="t td" style="right:501.5px;top:726.03px;margin-right:-.9px">4</div><div class="t td" style="left:1513.4px;top:726.03px">Group B</div><div class="t td" style="right:190px;top:726.03px;margin-right:-.9px">31</div><div class="t td" style="left:1824.6px;top:726.03px">1 - low</div>
<div class="a" style="left:689px;top:750.6px;width:1284.4px;height:4px;background:#fff"></div><div class="a" style="left:689px;top:754.5px;width:1284.4px;height:2px;background:#dadada"></div>
<div class="a" id="frame"></div>
</div>
</body>
</html>
